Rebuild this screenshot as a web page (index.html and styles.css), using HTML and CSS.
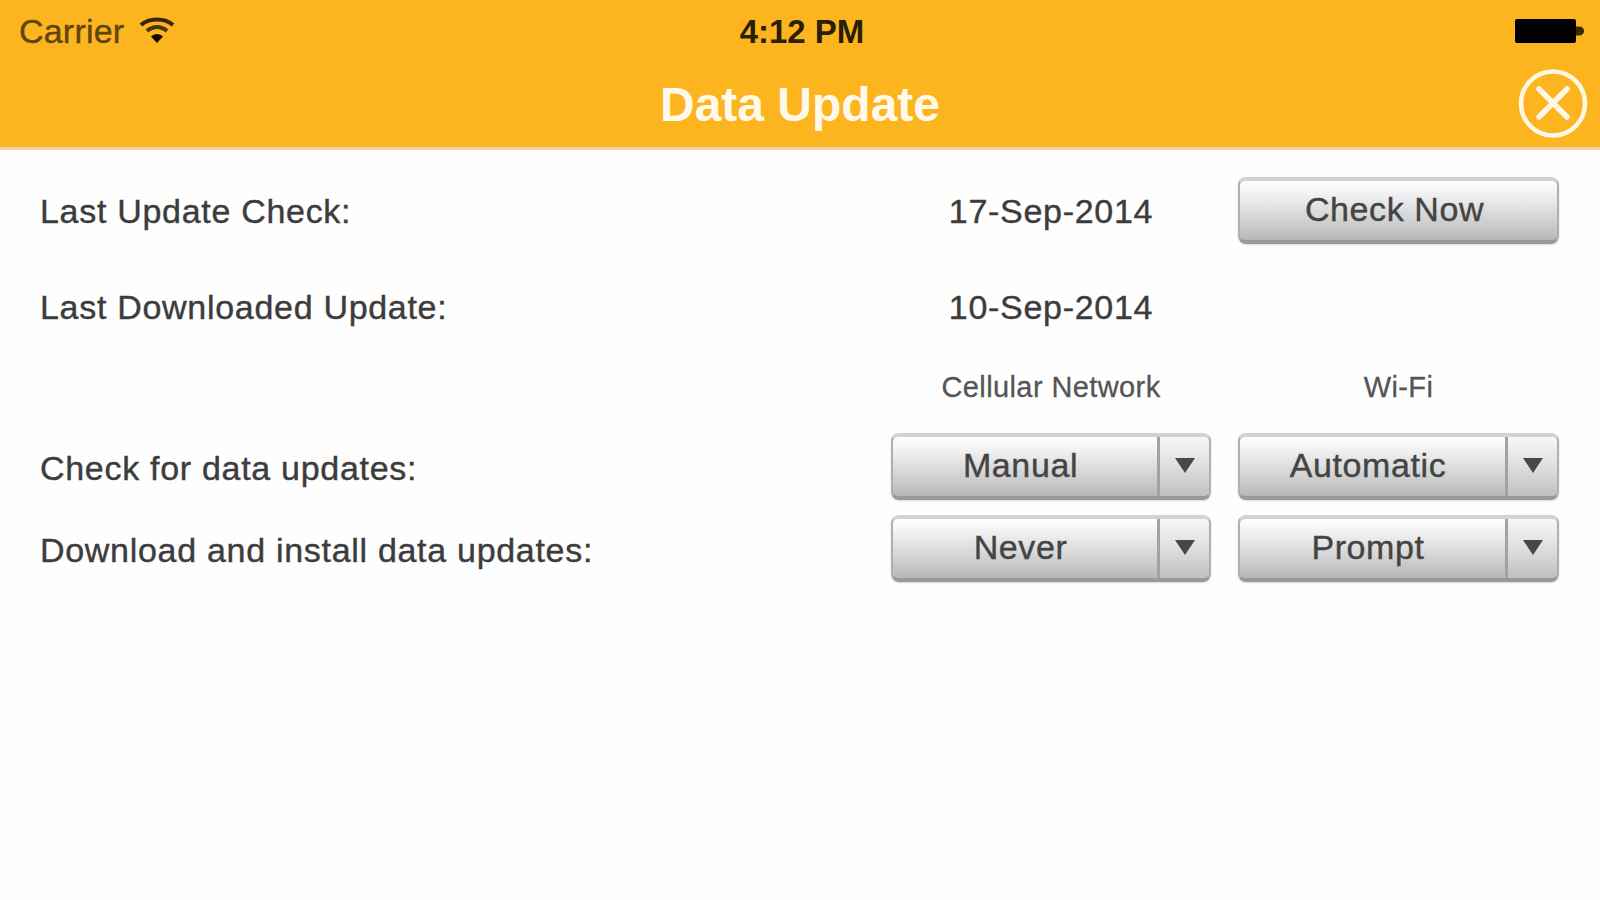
FILE: index.html
```html
<!DOCTYPE html>
<html lang="en">
<head>
  <meta charset="UTF-8">
  <meta name="viewport" content="width=device-width, initial-scale=1.0">
  <title>Data Update</title>
  <link rel="stylesheet" href="styles.css">
</head>
<body>
  <header>
    <div class="status-bar">
      <div class="carrier">
        <span>Carrier</span>
        <svg class="wifi" width="36" height="28" viewBox="0 0 36 28" fill="none" stroke="#4a360a" stroke-width="4">
          <path d="M2 9C10 1.500 26 1.500 34 9" stroke="#35260a"></path>
          <path d="M8 15C14 9.500 22 9.500 28 15"></path>
          <path d="M12 20.500C15.500 17 20.500 17 24 20.500L18 27Z" fill="#100b02" stroke="none"></path>
        </svg>
      </div>
      <div class="clock">4:12 PM</div>
      <svg class="battery" width="70" height="26" viewBox="0 0 70 26">
        <rect x="0" y="1" width="61" height="24" rx="2"></rect>
        <path d="M61 8.500h3c3 0 5 2 5 4.500s-2 4.500-5 4.500h-3z" fill="#3a2905"></path>
      </svg>
    </div>
    <div class="title-bar">
      <h1>Data Update</h1>
      <button class="close-button" aria-label="Close">
        <svg width="70" height="70" viewBox="0 0 70 70" fill="none" stroke="#fff7e6" stroke-linecap="round">
          <circle cx="35" cy="34.500" r="32" stroke-width="4.500"></circle>
          <path d="M21 20L49 48M49 20L21 48" stroke-width="5.500"></path>
        </svg>
      </button>
    </div>
  </header>

  <main class="settings">
    <div class="label">Last Update Check:</div>
    <div class="value">17-Sep-2014</div>
    <button class="button"><span class="button-text">Check Now</span></button>

    <div class="label">Last Downloaded Update:</div>
    <div class="value">10-Sep-2014</div>
    <div></div>

    <div></div>
    <div class="column-title">Cellular Network</div>
    <div class="column-title">Wi-Fi</div>

    <div class="label option-label">Check for data updates:</div>
    <button class="button select">
      <span class="button-text">Manual</span>
      <span class="arrow"></span>
    </button>
    <button class="button select">
      <span class="button-text">Automatic</span>
      <span class="arrow"></span>
    </button>

    <div class="label option-label">Download and install data updates:</div>
    <button class="button select">
      <span class="button-text">Never</span>
      <span class="arrow"></span>
    </button>
    <button class="button select">
      <span class="button-text">Prompt</span>
      <span class="arrow"></span>
    </button>
  </main>
</body>
</html>
```

FILE: styles.css
```css
body {
  font-family: "Liberation Sans", Helvetica, Arial, sans-serif;
  margin: 0;
  padding: 0;
  height: 900px;
  overflow: hidden;
  background-color: #fefefe;
  color: #3c3c3c;
}

button {
  font-family: inherit;
  padding: 0;
  border: none;
  background: none;
  cursor: pointer;
}

header {
  height: 150px;
  box-sizing: border-box;
  background-color: #fdb51f;
  border-bottom: 3px solid #eed3a1;
}

.status-bar {
  display: grid;
  grid-template-columns: 1fr auto 1fr;
  align-items: center;
  height: 62px;
  padding: 0 15px 0 19px;
}

.carrier {
  display: flex;
  align-items: center;
  font-size: 34px;
  letter-spacing: 0.2px;
  color: #5f450d;
  -webkit-text-stroke: 0.4px #5f450d;
}

.wifi {
  margin: 0 0 3px 15px;
}

.clock {
  margin-top: 1px;
  font-size: 33px;
  font-weight: bold;
  color: #2a1e05;
}

.battery {
  justify-self: end;
}

.title-bar {
  display: grid;
  grid-template-columns: 1fr auto 1fr;
  align-items: center;
  height: 83px;
  padding-right: 12px;
}

h1 {
  grid-column: 2;
  margin: 2px 0 0 12px;
  font-size: 48px;
  font-weight: bold;
  color: #fff9ec;
}

.close-button {
  justify-self: end;
  height: 70px;
}

.settings {
  display: grid;
  grid-template-columns: 1fr 320px 321px;
  grid-template-rows: 96px 96px 64px 96px 68px;
  column-gap: 27px;
  align-items: center;
  padding: 12px 41px 0 40px;
}

.label,
.value {
  padding-top: 2px;
  font-size: 34px;
  letter-spacing: 0.7px;
  -webkit-text-stroke: 0.4px #3c3c3c;
}

.option-label {
  padding-top: 5px;
}

.value,
.column-title {
  text-align: center;
}

.column-title {
  padding-top: 2px;
  font-size: 29px;
  letter-spacing: 0.4px;
  color: #555;
  -webkit-text-stroke: 0.3px #555;
}

.button {
  display: flex;
  height: 67px;
  box-sizing: border-box;
  border: 2px solid #b0b0b0;
  border-top: 4px solid #d2d2d2;
  border-bottom: 4px solid #999;
  border-radius: 8px;
  background: linear-gradient(#fff 0%, #ececec 30%, #d6d6d6 60%, #b8b8b8 100%);
  box-shadow: 0 1px 2px rgba(0, 0, 0, 0.15);
  font-size: 34px;
  letter-spacing: 0.6px;
  color: #444;
  -webkit-text-stroke: 0.4px #444;
}

.button-text {
  flex: 1;
  align-self: center;
  padding: 0 8px 1px 0;
}

.select .button-text {
  padding-right: 9px;
}

.arrow {
  display: flex;
  justify-content: center;
  align-items: center;
  width: 49px;
  height: 100%;
  border-left: 3px solid #a2a2a2;
  background: linear-gradient(#f7f7f7, #dedede 50%, #c0c0c0);
  border-radius: 0 5px 5px 0;
}

.arrow::before {
  content: '';
  margin-bottom: 2px;
  border-left: 10px solid transparent;
  border-right: 10px solid transparent;
  border-top: 15px solid #484848;
}
```
